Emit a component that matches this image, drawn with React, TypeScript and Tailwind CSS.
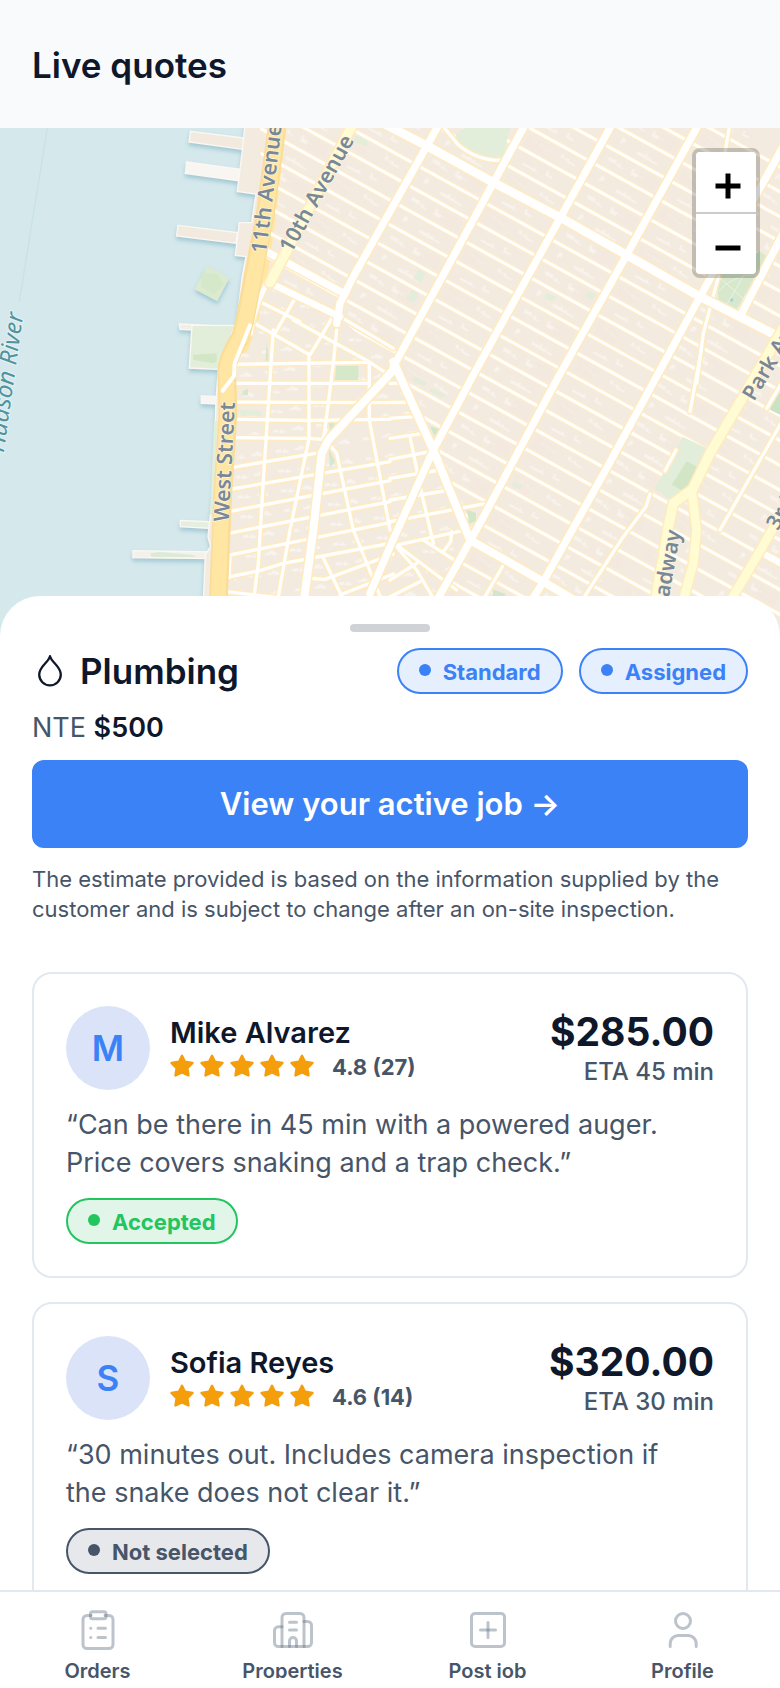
import type { ReactNode } from "react";
import { clsx } from "clsx";

type Tone = "info" | "success" | "muted";

type Quote = {
  name: string;
  rating: string;
  price: string;
  eta: string;
  message: string;
  status: string;
  tone: Tone;
};

const QUOTES: Quote[] = [
  {
    name: "Mike Alvarez",
    rating: "4.8 (27)",
    price: "$285.00",
    eta: "ETA 45 min",
    message: "“Can be there in 45 min with a powered auger. Price covers snaking and a trap check.”",
    status: "Accepted",
    tone: "success",
  },
  {
    name: "Sofia Reyes",
    rating: "4.6 (14)",
    price: "$320.00",
    eta: "ETA 30 min",
    message: "“30 minutes out. Includes camera inspection if the snake does not clear it.”",
    status: "Not selected",
    tone: "muted",
  },
];

const TONES: Record<Tone, string> = {
  info: "border-[#3b82f6] bg-[#e6effe] text-[#3b82f6]",
  success: "border-[#22c55e] bg-[#e2f5e9] text-[#22c55e]",
  muted: "border-[#475569] bg-[#e7e8ec] text-[#475569]",
};

function StatusPill({ tone, children }: { tone: Tone; children: ReactNode }) {
  return (
    <span
      className={clsx(
        "inline-flex h-[46px] items-center gap-3 rounded-full border-2 px-5 pt-[2px] text-[22px] font-bold",
        TONES[tone]
      )}
    >
      <span className="mb-1 h-3 w-3 rounded-full bg-current" />
      {children}
    </span>
  );
}

// Each quadrant of the map has its own origin inside the 2340x1530 canvas.
const ORIGIN = {
  nw: "translate(0 -384)",
  ne: "translate(1170 -24)",
  sw: "translate(0 606)",
  se: "translate(1170 666)",
};

type Road = { at: keyof typeof ORIGIN; d: string; w: number; fill?: string };

const AVENUES: Road[] = [
  { at: "ne", w: 22, d: "M160-10L-110 470L-150 550L-160 610" },
  { at: "ne", w: 22, d: "M410 5L10 740" },
  { at: "ne", w: 22, d: "M670 5L250 765L130 990L0 1280L-60 1420" },
  { at: "ne", w: 22, d: "M930 5L710 405L500 780L270 1210L130 1460" },
  { at: "ne", w: 22, d: "M1190 60L930 530L650 1045L460 1385L420 1450" },
  { at: "ne", w: 22, d: "M1190 320L1050 590" },
  { at: "ne", w: 26, d: "M-20 10L115 80L315 190L515 295L710 405L930 530L1170 652" },
  { at: "se", w: 24, d: "M10 35L130 300L240 570L460 695L570 760" },
  { at: "sw", w: 24, d: "M1185 115L985 330L965 370L940 600L912 810" },
  { at: "nw", w: 22, d: "M790 750L1035 882" },
  { at: "nw", w: 20, d: "M808 848L1020 950" },
  { at: "nw", w: 14, d: "M800 850L775 905L755 970L752 1000" },
  { at: "sw", w: 14, d: "M700 103L698 140L668 182" },
  { at: "se", w: 20, d: "M1110 605L1190 650" },
];

const SIDE_STREETS: Road[] = (
  [
    ["sw", "M700 103L1108 97"],
    ["sw", "M705 160L1108 160"],
    ["sw", "M703 160V216L1170 218L1230 217"],
    ["sw", "M705 268L925 271L1170 268"],
    ["sw", "M700 323L925 325L968 328L978 300"],
    ["sw", "M680 415L960 368"],
    ["sw", "M690 478L1170 395"],
    ["sw", "M690 544L1170 452"],
    ["sw", "M685 610L1170 515"],
    ["sw", "M680 677L1170 578"],
    ["sw", "M675 743L780 722L850 700L1000 672L1170 640"],
    ["sw", "M655 782L840 804"],
    ["sw", "M820 0L790 450L775 700L762 800"],
    ["sw", "M927 75V325L870 600L835 800"],
    ["sw", "M1010 0L1000 100L972 320"],
    ["sw", "M985 340L1010 370L1060 600L1140 798"],
    ["sw", "M1108 97V270L1170 600"],
    ["sw", "M930 745L975 748L1180 672"],
    ["sw", "M968 680L1025 798"],
    ["sw", "M1020 795L1180 732"],
    ["sw", "M690 677L687 743"],
    ["sw", "M760-22L930 75L972 5L1010-60"],
    ["sw", "M880-30L1110 97L1160 130"],
    ["sw", "M1020-40L1180 55"],
    ["nw", "M780 905L900 965"],
    ["nw", "M885 895L825 1000"],
    ["se", "M0 100H40"],
    ["se", "M0 157H60"],
    ["se", "M0 205L75 200"],
    ["se", "M0 265L100 250"],
    ["se", "M0 328L130 303"],
    ["se", "M0 385L150 360"],
    ["se", "M0 450L180 420"],
    ["se", "M0 515L290 460"],
    ["se", "M0 590L250 535"],
    ["se", "M60 260L95 430L130 580"],
    ["se", "M185 545L182 575L160 605"],
    ["se", "M100 570L200 635"],
    ["se", "M0 690L80 640"],
    ["se", "M0 740L90 695"],
    ["se", "M15 585L80 660L130 745"],
    ["se", "M20 585L200 720"],
    ["se", "M340 645L285 740"],
    ["se", "M780 432L768 470L700 560L580 745"],
    ["se", "M858 300L825 362"],
    ["se", "M1190 190L990 540"],
    ["se", "M1180 90L1130 175"],
    ["se", "M470 690L440 745"],
    ["se", "M935-5L900 185"],
    ["ne", "M1020 10L1003 110"],
    ["ne", "M160 20L205 75Q270 128 345 120"],
    ["ne", "M985 470L940 640L920 790"],
  ] as [Road["at"], string][]
).map(([at, d]) => ({ at, d, w: 10 }));

const BOULEVARDS: Road[] = [
  { at: "ne", w: 28, d: "M1200 590L960 1000L908 1108L850 1150L835 1220L795 1450", fill: "#fffbd2" },
  { at: "se", w: 26, d: "M905 420L920 540L910 640L880 750", fill: "#fffbd2" },
  { at: "se", w: 26, d: "M1190 465L1100 620L1020 755", fill: "#fffbd2" },
  { at: "nw", w: 28, d: "M1060 370L810 848", fill: "#fffbd2" },
];

// The numbered streets all run parallel, one block apart.
const GRID = Array.from({ length: 42 }, (_, i) => -845 + i * 74.6);

function RoadLayer({ roads }: { roads: Road[] }) {
  return (
    <>
      {roads.map((r, i) => (
        <path key={`c${i}`} d={r.d} transform={ORIGIN[r.at]} stroke="#ffebc0" strokeWidth={r.w + 9} />
      ))}
      {roads.map((r, i) => (
        <path key={`f${i}`} d={r.d} transform={ORIGIN[r.at]} stroke={r.fill ?? "#fff"} strokeWidth={r.w} />
      ))}
    </>
  );
}

function MapCanvas() {
  return (
    <svg
      viewBox="0 0 2340 1530"
      preserveAspectRatio="xMinYMin slice"
      className="block h-full w-full"
      role="img"
      aria-label="Map of the area around the job"
    >
      <defs>
        {/* two city blocks by two streets, lined up with the grid */}
        <pattern
          id="blocks"
          width="458"
          height="130.6"
          patternUnits="userSpaceOnUse"
          patternTransform="rotate(28.95) translate(-1 15)"
        >
          <g fill="#fbf8f4" opacity=".6">
            <path d="M38 22h20v5h10v-4h8v6h18v5H72v-4H50v-4H38zM140 20h8v8h12v-4h8v6h22v5h-26v-4h-24z" />
            <path d="M276 20h12v12h-6v6h-6zM334 34h26v-6h6v8h10v-4h6v6h24v5h-70z" />
            <path d="M52 100h36v-5h5v8h8v4H52zM126 86h6v10h18v6h-24z" />
            <path d="M268 90h26v7h10v-4h6v7h12v4h-18v-4h-34zM348 86h7v9h34v5h-18v5h-22z" />
          </g>
          <path d="M24 14h70v38H24zM370 80h64v36h-64z" fill="#f1e7db" opacity=".5" />
        </pattern>
        <pattern
          id="village"
          width="132"
          height="60"
          patternUnits="userSpaceOnUse"
          patternTransform="rotate(-8) translate(10 34)"
        >
          <path
            d="M14 18h16v5h8v-4h6v6h8v5H36v-4H14zM72 20h12v-4h14v6h8v8H94v-4H72z"
            fill="#fbf8f4"
            opacity=".7"
          />
        </pattern>
        <clipPath id="grid-area">
          <path d="M780-10H2340V1530H1290L1410 1236L1300 966L1180 711L1010 562L815 466L790 370Z" />
        </clipPath>
        <filter id="pier-shadow" x="-20%" y="-20%" width="140%" height="160%">
          <feDropShadow dx="0" dy="9" stdDeviation="6" floodColor="#7fb3c2" floodOpacity=".6" />
        </filter>
      </defs>

      <rect width="2340" height="1530" fill="#d5e8ec" />
      <path d="M142 0L58 520" stroke="#c8e2e8" strokeWidth="4" />

      {/* piers and waterfront */}
      <g filter="url(#pier-shadow)" stroke="#fbf8f4" strokeWidth="4">
        <path d="M572 10L735 30L727 64L567 42Z" fill="#f2eadf" />
        <path d="M560 102L722 124L716 158L556 136Z" fill="#f9f6f2" />
        <path d="M534 292L712 314L708 346L530 324Z" fill="#f2eadf" />
        <path d="M622 414L688 450L652 520L584 484Z" fill="#dcebd0" stroke="none" />
        <path d="M538 588L700 596V612L540 604Z" fill="#f3eee6" />
        <path d="M576 592H705L655 724L568 720Z" fill="#e3eeda" />
        <path d="M604 804L660 806V828L604 826Z" fill="#f9f6f2" />
        <path d="M541 1177L640 1182V1202L541 1196Z" fill="#e6efdf" />
        <path d="M399 1268L640 1272V1292L399 1289Z" fill="#f3f1ea" />
        <path
          d="M735-10L727 66L712 190L768 198L755 284L718 284L706 382L738 386L726 450L708 606L655 726L648 816L640 1086L624 1226L632 1256L616 1280L605 1540H2350V-10Z"
          fill="#f4ebe0"
        />
      </g>
      <path d="M450 1276L480 1272L575 1280L590 1287H455Z" fill="#dcebd6" />
      <path d="M580 680L650 676V700L640 706L580 696Z" fill="#d3e6c6" />
      <path d="M602 432L652 440L672 470L640 500L606 478Z" fill="#d2e6c6" opacity=".6" />

      <path d="M720 590L815 466L1010 562L1180 711L1300 966L1410 1236L1290 1530H700Z" fill="url(#village)" />
      <path d="M780-10H2340V1530H1290L1410 1236L1300 966L1180 711L1010 562L815 466Z" fill="url(#blocks)" />

      {/* streets */}
      <g fill="none" strokeLinecap="round" strokeLinejoin="round">
        <path d="M842-10L812 256L790 416L758 576L728 660" stroke="#ffe6a3" strokeWidth="34" />
        <g clipPath="url(#grid-area)">
          {GRID.map((y) => (
            <path key={`gc${y}`} d={`M600 ${y}l1800 995`} stroke="#ffecc8" strokeWidth="16" />
          ))}
          {GRID.map((y) => (
            <path key={`gf${y}`} d={`M600 ${y}l1800 995`} stroke="#fff" strokeWidth="9" />
          ))}
        </g>
      </g>

      {/* parks */}
      <g fill="#e2edda">
        <path d="M1370 15L1395 0H1530L1510 85L1470 88L1420 75L1365 30Z" />
        <path d="M2150 440L2280 370L2300 385L2210 545L2155 515Z" fill="#d7e8cd" />
        <path d="M2048 926L2130 965L2060 1090L2010 1115L1965 1080Z" />
        <path d="M2060 1000L2098 1020L2050 1090L2015 1070Z" fill="#d2e6c5" />
        <path d="M2310 845L2325 795H2340V860Z" fill="#c9e2c3" />
        <path d="M1008 712H1075V756H1005Z" fill="#d5e8ca" />
        <path d="M1255 424l22 12l-14 28l-22-12zM1235 485l22 12l-16 28l-22-12z" />
        <path d="M1640 494l28 12l-10 14l-24-10zM1764 489l22 10l-10 16l-20-8z" />
        <path d="M1068 22l36 18l-6 16l-38-18z" />
        <path d="M1245 745l35 20l-8 10l-34-18zM1296 780l40 20l-8 10l-40-20z" />
        <path d="M1400 1145l28 10v24l-20 8z" fill="#d2e6c8" />
        <path d="M985 885h20l-12 30zM985 960l20 40l-14 20z" fill="#d5e8cd" />
        <path d="M1290 895l26 8l-12 22z" fill="#d2e6c8" />
        <path d="M1540 1060l26 14l-6 10l-24-12z" />
        <path d="M1480 1384l36 14v20h-40z" fill="#d2e6c8" />
        <path d="M715 845l70 4v14h-60z" />
        <path d="M642 880h12l-14 280h-10z" />
        <path d="M730 788l14-6v20h-18zM800 640l8 60h-12z" fill="#d5e8cd" />
      </g>
      <circle cx="2195" cy="516" r="5" fill="#a9cfdb" />
      <path
        d="M2160 450L2250 530M2250 410L2180 530M2155 490Q2200 440 2270 440"
        stroke="#e9f3e2"
        strokeWidth="3"
        fill="none"
      />

      <g fill="none" strokeLinecap="round" strokeLinejoin="round">
        <RoadLayer roads={SIDE_STREETS} />
        <RoadLayer roads={AVENUES} />
        <RoadLayer roads={BOULEVARDS} />
        <path
          d="M832-10L796 256L765 416L735 576L722 626Q682 690 680 730L684 856L668 1106L650 1540"
          stroke="#fbdc98"
          strokeWidth="56"
        />
        <path
          d="M832-10L798 256L767 416L737 576L724 626Q682 690 680 730L682 856L666 1106L650 1540"
          stroke="#ffe6a3"
          strokeWidth="44"
        />
        <path d="M750 592L704 706L702 744L668 788" stroke="#fff" strokeWidth="12" />
      </g>

      {/* labels */}
      <g
        fill="#788896"
        stroke="#fff7e2"
        strokeWidth="4"
        paintOrder="stroke"
        className="font-['Noto_Sans'] text-[64px] font-semibold"
      >
        <text transform="translate(798 378) rotate(-83)">11th Avenue</text>
        <text transform="translate(874 378) rotate(-61)">10th Avenue</text>
        <text transform="translate(686 1182) rotate(-87)">West Street</text>
        <text transform="translate(2262 822) rotate(-59)">Park Avenue</text>
        <text transform="translate(1988 1516) rotate(-80)">Broadway</text>
        <text transform="translate(2334 1210) rotate(-60)">3rd Avenue</text>
      </g>
      <text
        transform="translate(11 975) rotate(-82)"
        fill="#4f949e"
        stroke="#e6f2f4"
        strokeWidth="6"
        paintOrder="stroke"
        className="font-['Noto_Sans'] text-[72px] italic"
      >
        Hudson River
      </text>
    </svg>
  );
}

function ZoomControl() {
  return (
    <div className="absolute right-5 top-5 overflow-hidden rounded-lg border-4 border-black/20 bg-clip-padding">
      <button
        type="button"
        aria-label="Zoom in"
        className="flex h-[62px] w-[60px] items-center justify-center border-b-2 border-[#ccc] bg-white"
      >
        <svg viewBox="0 0 26 26" className="ml-1 mt-2 h-[26px] w-[26px]" stroke="#000" strokeWidth="5">
          <path d="M0.5 13h25M13 0.5v25" />
        </svg>
      </button>
      <button
        type="button"
        aria-label="Zoom out"
        className="flex h-[60px] w-[60px] items-center justify-center bg-white"
      >
        <svg viewBox="0 0 26 26" className="ml-1 mt-2 h-[26px] w-[26px]" stroke="#000" strokeWidth="5">
          <path d="M0.5 13h25" />
        </svg>
      </button>
    </div>
  );
}

function DropIcon() {
  return (
    <svg
      viewBox="0 0 36 36"
      className="h-9 w-9"
      fill="none"
      stroke="currentColor"
      strokeWidth="2.3"
      strokeLinejoin="round"
    >
      <path d="M18 3.2C16.4 9.6 7.2 13.2 7.2 21.6a10.8 10.8 0 0 0 21.6 0C28.8 13.2 19.6 9.6 18 3.2z" />
    </svg>
  );
}

function StarIcon() {
  return (
    <svg
      viewBox="0 0 24 24"
      className="h-6 w-6"
      fill="currentColor"
      stroke="currentColor"
      strokeWidth="2.4"
      strokeLinejoin="round"
    >
      <path d="M12 1.8L15 7.8L22.5 9L17.4 14.2L18.5 21.4L12 18.4L5.5 21.4L6.6 14.2L1.5 9L9 7.8Z" />
    </svg>
  );
}

function QuoteCard({ quote }: { quote: Quote }) {
  return (
    <li className="flex flex-col items-start gap-4 rounded-[20px] border-2 border-slate-200 bg-white p-8">
      <div className="flex w-full items-center gap-5">
        <div className="flex h-[84px] w-[84px] shrink-0 items-center justify-center rounded-full bg-[#dae3f8] text-[35px] font-semibold text-[#3b82f6]">
          {quote.name[0]}
        </div>
        <div className="min-w-0 flex-1">
          <p className="truncate text-[29px] leading-9 font-semibold text-[#0f172a]">{quote.name}</p>
          <div className="flex items-center gap-[6px] text-[#f59e0b]">
            {Array.from({ length: 5 }, (_, i) => (
              <StarIcon key={i} />
            ))}
            <span className="ml-3 pt-[2px] text-[22px] leading-7 font-bold text-[#475569]">{quote.rating}</span>
          </div>
        </div>
        <div className="pt-1 text-right">
          <p className="text-[39px] leading-[44px] font-bold text-[#0f172a]">{quote.price}</p>
          <p className="text-2xl leading-9 font-medium text-[#475569]">{quote.eta}</p>
        </div>
      </div>
      <p className="pr-4 text-[27px] leading-[38px] text-[#475569]">{quote.message}</p>
      <StatusPill tone={quote.tone}>{quote.status}</StatusPill>
    </li>
  );
}

const TABS: { label: string; icon: ReactNode }[] = [
  {
    label: "Orders",
    icon: (
      <>
        <path d="M13 5.5H9a4 4 0 0 0-4 4v25a4 4 0 0 0 4 4h22a4 4 0 0 0 4-4v-25a4 4 0 0 0-4-4h-4" />
        <rect x="12.5" y="1.8" width="15.5" height="7" rx="2" />
        <path d="M12.7 18.3h.1M12.7 27.4h.1M20 18.3h7.5M20 27.4h7.5" />
      </>
    ),
  },
  {
    label: "Properties",
    icon: (
      <>
        <path d="M9 36.5v-29a4 4 0 0 1 4-4h14a4 4 0 0 1 4 4v29" />
        <path d="M9 16.8H5.5a4 4 0 0 0-4 4v11.7a4 4 0 0 0 4 4h29a4 4 0 0 0 4-4v-17a4 4 0 0 0-4-4H31" />
        <path d="M16.5 12.3h7M16.5 20h7" />
        <path d="M16.5 36.5V31a3.5 3.5 0 0 1 7 0v5.5" />
      </>
    ),
  },
  {
    label: "Post job",
    icon: (
      <>
        <rect x="3.5" y="3.5" width="33" height="33" rx="3.5" />
        <path d="M12.5 20h15" />
        <path d="M20 12.5v15" />
      </>
    ),
  },
  {
    label: "Profile",
    icon: (
      <>
        <circle cx="20" cy="11" r="7.5" />
        <path d="M7.2 36.5v-3a8 8 0 0 1 8-8h10a8 8 0 0 1 8 8v3" />
      </>
    ),
  },
];

function TabBar() {
  return (
    <nav className="fixed inset-x-0 bottom-0 h-[98px] border-t-2 border-slate-200 bg-white pb-[10px]">
      <div className="grid h-full grid-cols-4 overflow-hidden">
        {TABS.map((tab) => (
          <a key={tab.label} href="#" className="flex flex-col items-center gap-[7px] pt-[18px]">
            <svg
              viewBox="0 0 40 40"
              className="h-10 w-10 shrink-0"
              fill="none"
              stroke="#5f6f80"
              strokeOpacity=".42"
              strokeWidth="3"
              strokeLinecap="round"
              strokeLinejoin="round"
            >
              {tab.icon}
            </svg>
            <span className="text-xl leading-7 font-semibold text-[#475569]">{tab.label}</span>
          </a>
        ))}
      </div>
    </nav>
  );
}

export default function App() {
  return (
    <div className="h-screen overflow-hidden bg-[#f9fafc] font-['Inter',sans-serif]">
      <header className="flex h-32 items-center px-8 pt-[2px]">
        <h1 className="text-[35px] font-semibold text-[#0f172a]">Live quotes</h1>
      </header>

      <section className="relative h-[510px]">
        <MapCanvas />
        <ZoomControl />
      </section>

      <main className="relative -mt-[42px] rounded-t-[40px] bg-white px-8 pt-7 pb-28">
        <div className="mx-auto h-2 w-20 rounded-full bg-[#cfd3d8]" />

        <div className="mt-4 flex items-center justify-between">
          <h2 className="flex items-center gap-3 text-[35px] leading-[46px] font-semibold text-[#0f172a]">
            <DropIcon />
            Plumbing
          </h2>
          <div className="flex gap-4">
            <StatusPill tone="info">Standard</StatusPill>
            <StatusPill tone="info">Assigned</StatusPill>
          </div>
        </div>

        <p className="mt-4 text-[27px] leading-9 text-[#475569]">
          NTE <span className="font-semibold text-[#0f172a]">$500</span>
        </p>

        <button
          type="button"
          className="mt-[14px] h-[88px] w-full rounded-xl bg-[#3b82f6] text-[31px] font-semibold text-white"
        >
          View your active job →
        </button>

        <p className="mt-4 text-[22px] leading-[30px] text-[#475569]">
          The estimate provided is based on the information supplied by the customer and is subject to change after an
          on-site inspection.
        </p>

        <ul className="mt-12 flex flex-col gap-6">
          {QUOTES.map((quote) => (
            <QuoteCard key={quote.name} quote={quote} />
          ))}
        </ul>
      </main>

      <TabBar />
    </div>
  );
}
